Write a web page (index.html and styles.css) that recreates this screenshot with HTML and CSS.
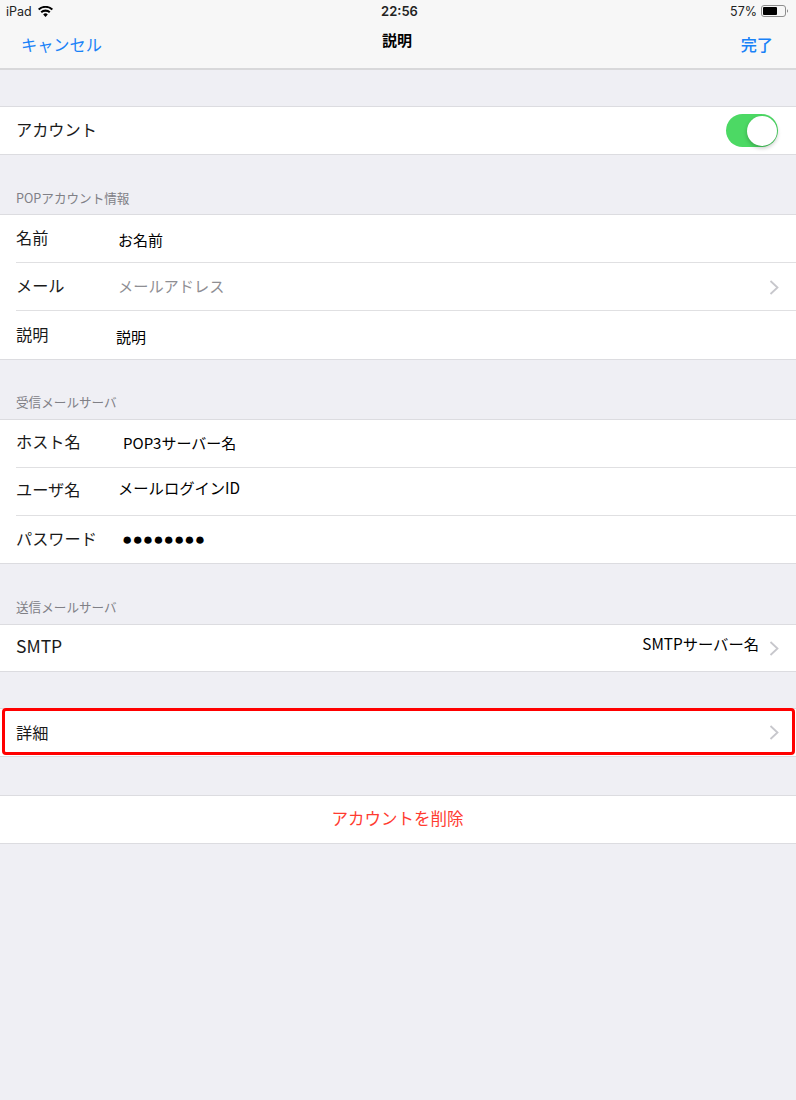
FILE: index.html
```html
<!DOCTYPE html>
<html lang="ja">
<head>
<meta charset="utf-8">
<title>説明</title>
<link rel="stylesheet" href="styles.css">
</head>
<body>
<header class="bars">
  <div class="status">
    <div class="status-left">
      <span>iPad</span>
      <svg class="wifi" width="15" height="11" viewBox="0 0 15 11"><path d="M7.5 11 5.2 8.4a3.4 3.4 0 0 1 4.6 0Z M3.9 7.1 2.5 5.5a7.4 7.4 0 0 1 10 0L11.1 7.1a5.3 5.3 0 0 0-7.2 0Z M1.3 4.3 0 2.8a11 11 0 0 1 15 0L13.7 4.3a9.1 9.1 0 0 0-12.4 0Z" fill="#000"/></svg>
    </div>
    <div class="status-time">22:56</div>
    <div class="status-right">
      <span>57%</span>
      <svg width="27" height="12" viewBox="0 0 27 12"><rect x="0.5" y="0.5" width="24" height="11" rx="2.5" fill="none" stroke="#8e8e8e"/><rect x="2" y="2" width="14" height="8" rx="1" fill="#000"/><path d="M26 4.2a2 2 0 0 1 0 3.6Z" fill="#8e8e8e"/></svg>
    </div>
  </div>
  <nav class="nav">
    <a class="nav-cancel">キャンセル</a>
    <div class="nav-title">説明</div>
    <a class="nav-done">完了</a>
  </nav>
</header>

<main>
  <section class="group first">
    <div class="row h47">
      <span class="label">アカウント</span>
      <span class="toggle"><span class="knob"></span></span>
    </div>
  </section>

  <h2 class="section-title s1">POPアカウント情報</h2>
  <section class="group">
    <div class="row inset"><span class="label col">名前</span><span class="value v-name">お名前</span></div>
    <div class="row inset"><span class="label col">メール</span><span class="value placeholder">メールアドレス</span>
      <svg class="chev" width="10" height="15" viewBox="0 0 10 15"><path d="M1.5 1 8.5 7.5 1.5 14" fill="none" stroke="#c7c7cc" stroke-width="1.8"/></svg></div>
    <div class="row"><span class="label col lower">説明</span><span class="value v-desc">説明</span></div>
  </section>

  <h2 class="section-title s2">受信メールサーバ</h2>
  <section class="group">
    <div class="row inset"><span class="label col higher">ホスト名</span><span class="value v-host">POP3サーバー名</span></div>
    <div class="row inset"><span class="label col higher">ユーザ名</span><span class="value v-user">メールログインID</span></div>
    <div class="row h47"><span class="label col">パスワード</span><span class="value v-pass">●●●●●●●●</span></div>
  </section>

  <h2 class="section-title s3">送信メールサーバ</h2>
  <section class="group">
    <div class="row h46"><span class="label smtp">SMTP</span><span class="value v-smtp">SMTPサーバー名</span>
      <svg class="chev" width="10" height="15" viewBox="0 0 10 15"><path d="M1.5 1 8.5 7.5 1.5 14" fill="none" stroke="#c7c7cc" stroke-width="1.8"/></svg></div>
  </section>

  <section class="group gap-detail detail">
    <div class="row h47"><span class="label detail-label">詳細</span>
      <svg class="chev end" width="10" height="15" viewBox="0 0 10 15"><path d="M1.5 1 8.5 7.5 1.5 14" fill="none" stroke="#c7c7cc" stroke-width="1.8"/></svg></div>
    <div class="highlight"></div>
  </section>

  <section class="group gap-delete">
    <div class="row h47 center"><span class="delete">アカウントを削除</span></div>
  </section>
</main>
</body>
</html>
```
FILE: styles.css
```css
* { box-sizing: border-box; }
html, body { margin: 0; padding: 0; }
body {
  width: 796px;
  height: 1100px;
  background: #efeff4;
  font-family: "Noto Sans CJK JP", "Noto Sans", sans-serif;
  color: #111;
  overflow: hidden;
}
.bars {
  height: 70px;
  background: #f7f7f7;
  border-bottom: 2px solid #d8d8da;
}
.status {
  display: grid;
  grid-template-columns: 1fr auto 1fr;
  align-items: center;
  height: 22px;
  padding: 0 8px 0 6px;
  font-family: "Inter", "Liberation Sans", sans-serif;
  font-size: 12.5px;
  color: #222;
}
.status-left { display: flex; align-items: center; gap: 6px; }
.status-time { font-weight: 600; font-size: 13px; padding-left: 5px; }
.status-right { display: flex; align-items: center; justify-content: flex-end; gap: 4px; }
.nav {
  display: grid;
  grid-template-columns: 1fr auto 1fr;
  height: 46px;
  padding: 0 23px 0 21px;
}
.nav-cancel, .nav-done {
  color: #1a82f7;
  font-size: 16.2px;
  line-height: 44px;
}
.nav-done { font-weight: 500; text-align: right; }
.nav-title {
  font-size: 15px;
  font-weight: 700;
  color: #000;
  line-height: 36px;
}
.group {
  background: #fff;
  border-top: 1px solid #dcdce0;
  border-bottom: 1px solid #dcdce0;
}
.group.first { margin-top: 36px; }
.section-title {
  margin: 0;
  padding-left: 16px;
  font-size: 12.6px;
  font-weight: 400;
  color: #808086;
  line-height: 18px;
}
.s1 { padding-top: 34px; padding-bottom: 7px; }
.s2 { padding-top: 33px; padding-bottom: 8px; }
.s3 { padding-top: 34px; padding-bottom: 8px; }
.row {
  display: flex;
  align-items: center;
  height: 48px;
  padding: 0 17px 0 16px;
  position: relative;
}
.row.h47 { height: 47px; }
.row.h46 { height: 46px; }
.row.inset::after {
  content: "";
  position: absolute;
  left: 16px;
  right: 0;
  bottom: 0;
  height: 1px;
  background: #e0e0e2;
}
.label {
  font-size: 16.2px;
  color: #1a1a1a;
  line-height: 24px;
  margin-top: -4px;
}
.col { flex: none; width: 100px; }
.label.lower { margin-top: -2px; }
.label.higher { margin-top: -6px; }
.smtp { font-size: 17.5px; }
.label.detail-label { margin-top: -2px; }
.value { font-size: 15px; color: #000; line-height: 20px; }
.placeholder { color: #8e8e93; font-size: 15.2px; margin-left: 2px; margin-top: -4px; flex: 1; }
.v-name { margin-left: 2px; margin-top: 2px; }
.v-desc { margin-top: 4px; }
.v-host { margin-left: 7px; margin-top: -2px; }
.v-user { margin-left: 2px; margin-top: -11px; font-size: 15.3px; }
.v-pass {
  margin-left: 6px;
  margin-top: -2px;
  font-family: "Liberation Sans", sans-serif;
  font-size: 17.2px;
}
.v-smtp { margin-left: auto; margin-right: 10px; margin-top: -10px; font-size: 15.3px; }
.chev { flex: none; margin-left: auto; }
.v-smtp + .chev { margin-left: 0; }
.placeholder + .chev { margin-left: 0; }
.toggle {
  margin-left: auto;
  margin-right: 1px;
  width: 52px;
  height: 33px;
  border-radius: 17px;
  background: #4cd964;
  display: flex;
  justify-content: flex-end;
  align-items: center;
  padding-right: 1px;
}
.knob {
  width: 30px;
  height: 30px;
  border-radius: 50%;
  background: #fff;
  box-shadow: 0 2px 4px rgba(0,0,0,.25);
}
.gap-detail { margin-top: 36px; }
.gap-delete { margin-top: 38px; }
.detail { position: relative; }
.highlight {
  position: absolute;
  left: 2px;
  right: 1px;
  top: -1px;
  bottom: 1px;
  border: 3px solid #f00;
  border-radius: 4px;
}
.center { justify-content: center; }
.delete { color: #ff3b30; font-size: 16.5px; margin-top: -4px; }
```
